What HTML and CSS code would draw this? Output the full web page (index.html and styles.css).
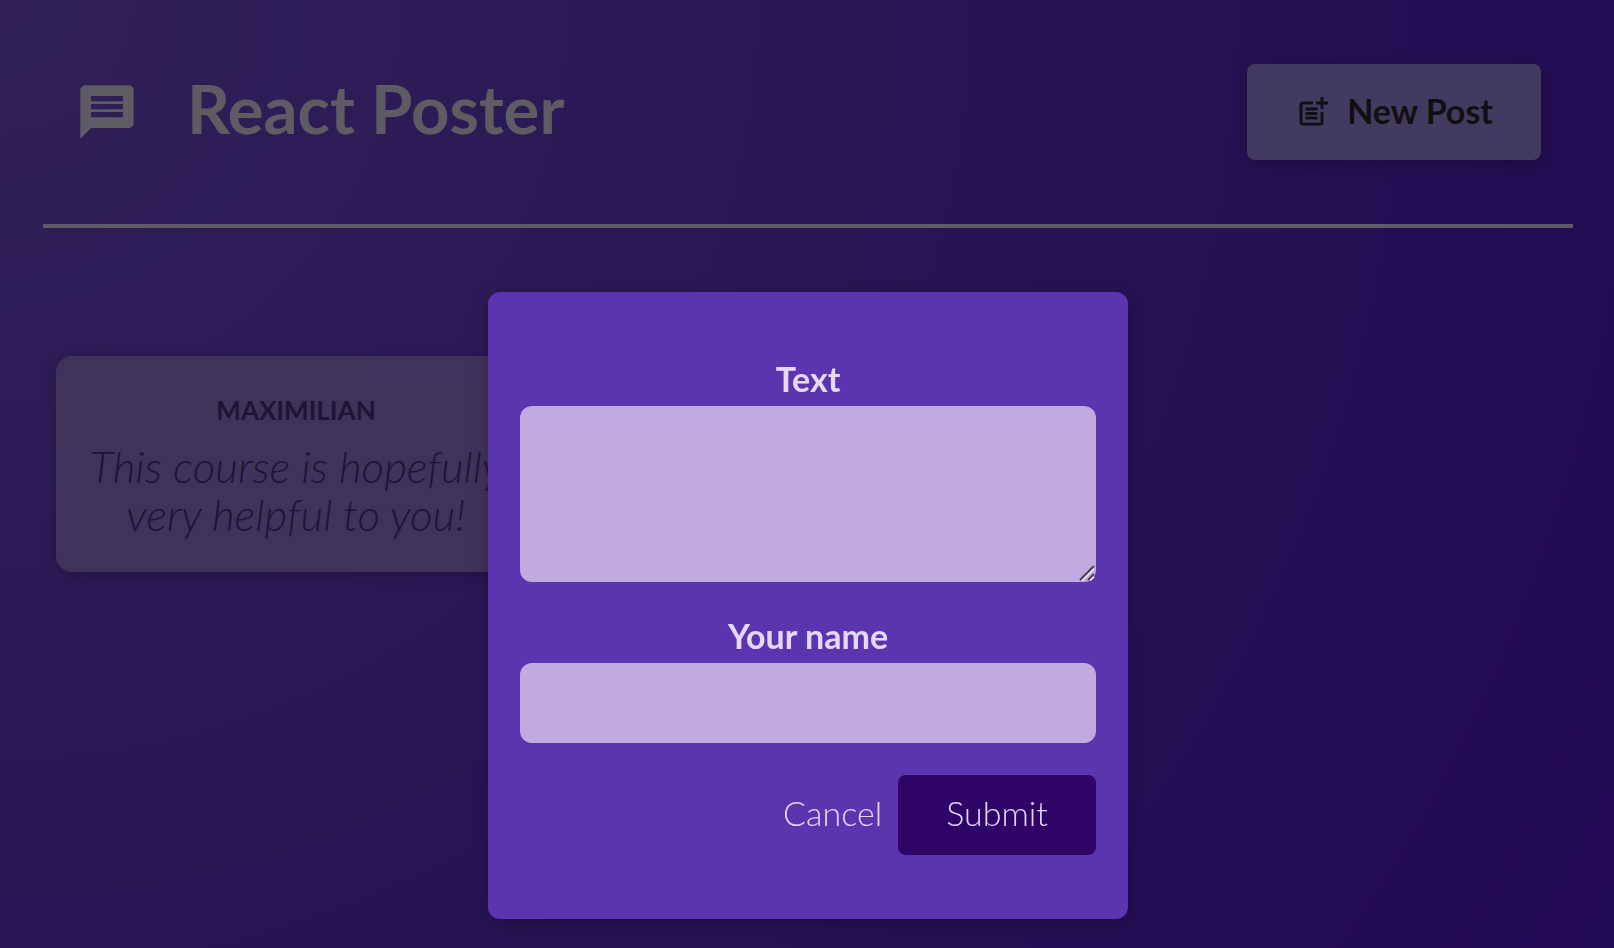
FILE: index.html
```html
<!DOCTYPE html>
<html lang="en">
<head>
<meta charset="utf-8">
<meta name="viewport" content="width=device-width, initial-scale=1">
<title>React Poster</title>
<link rel="stylesheet" href="styles.css">
</head>
<body>
<header class="header">
  <h1 class="logo">
    <svg class="logo-icon" viewBox="0 0 24 24" fill="currentColor" aria-hidden="true"><path d="M20 2H4c-1.100 0-1.990.9-1.990 2L2 22l4-4h14c1.100 0 2-.9 2-2V4c0-1.100-.9-2-2-2zm-2 12H6v-2h12v2zm0-3H6V9h12v2zm0-3H6V6h12v2z"/></svg>
    <span class="logo-text">React Poster</span>
  </h1>
  <button class="new-post" type="button">
    <svg class="new-post-icon" viewBox="0 0 24 24" fill="currentColor" aria-hidden="true"><path d="M17 19.220H5V7h7V5H5c-1.100 0-2 .9-2 2v12c0 1.100.9 2 2 2h12c1.100 0 2-.9 2-2v-7h-2v7.220z"/><path d="M19 2h-2v3h-3v2h3v3h2V7h3V5h-3zM7 9h8v2H7zM7 12h8v2H7zM7 15h8v2H7z"/></svg>
    <span class="new-post-text">New Post</span>
  </button>
</header>
<main>
  <ul class="posts">
    <li class="post">
      <p class="author">Maximilian</p>
      <p class="text">This course is hopefully very helpful to you!</p>
    </li>
  </ul>
</main>
<div class="backdrop"></div>
<dialog class="modal" open>
  <form class="form">
    <div class="field">
      <label for="body">Text</label>
      <div class="text-area">
        <textarea id="body" rows="3" required></textarea>
        <svg class="grip" viewBox="0 0 16 16" fill="none" stroke-width="2" aria-hidden="true"><path stroke="#eee6f6" d="M3 15.500 15 3.500M11 15.500l4-4"/><path stroke="#4b415a" d="M1 15 15 1M9 15l6-6"/></svg>
      </div>
    </div>
    <div class="field">
      <label for="name">Your name</label>
      <input id="name" type="text" required>
    </div>
    <div class="actions">
      <button class="cancel" type="button">Cancel</button>
      <button class="submit" type="submit">Submit</button>
    </div>
  </form>
</dialog>
</body>
</html>
```
FILE: styles.css
```css
* {
  box-sizing: border-box;
}

body {
  margin: 0;
  padding: 0 41px 0 43px;
  min-height: 100vh;
  font-family: Lato, "Open Sans", sans-serif;
  font-size: 34px;
  color: #ede3fa;
  background: radial-gradient(circle at top left, #7852d8, #5219cf);
}

.header {
  display: flex;
  justify-content: space-between;
  align-items: center;
  padding: 64px 32px;
  border-bottom: 4px solid #ece3f8;
}

.logo {
  display: flex;
  align-items: center;
  gap: 48px;
  margin: 0;
  font-size: 67px;
  line-height: 72px;
  font-weight: 700;
  color: #ece3f8;
}

.logo-icon {
  width: 64px;
  height: 64px;
}

.logo-text {
  padding-bottom: 8px;
}

.new-post {
  display: flex;
  align-items: center;
  gap: 16px;
  height: 96px;
  padding: 0 48px;
  border: none;
  border-radius: 8px;
  font: inherit;
  font-weight: 700;
  color: #29272c;
  background: #a991ee;
  box-shadow: 0 4px 16px rgba(0, 0, 0, 0.25);
  cursor: pointer;
}

.new-post-icon {
  width: 36px;
  height: 36px;
}

.new-post-text {
  padding-bottom: 4px;
}

.posts {
  display: grid;
  grid-template-columns: repeat(auto-fill, 480px);
  justify-content: start;
  gap: 32px;
  margin: 128px 0 0;
  padding: 0 13px;
  list-style: none;
}

.post {
  padding: 38px 24px 34px;
  border-radius: 16px;
  text-align: center;
  color: #4c3584;
  background: #9d80e4;
  box-shadow: 0 4px 16px rgba(0, 0, 0, 0.2);
}

.author {
  margin: 0;
  font-size: 26px;
  line-height: 32px;
  font-weight: 700;
  text-transform: uppercase;
}

.text {
  margin: 16px 0 0;
  font-size: 44px;
  line-height: 48px;
  font-weight: 300;
  font-style: italic;
}

.backdrop {
  position: fixed;
  inset: 0;
  background: rgba(0, 0, 0, 0.6);
}

.modal {
  position: absolute;
  top: 292px;
  left: 2px;
  right: 0;
  width: 640px;
  margin: 0 auto;
  padding: 0;
  border: none;
  border-radius: 12px;
  overflow: hidden;
  color: #e6d8fa;
  background: #5b35b0;
  box-shadow: 0 4px 16px rgba(0, 0, 0, 0.25);
}

.form {
  display: grid;
  gap: 32px;
  padding: 65px 32px 64px;
}

.field {
  display: grid;
  gap: 5px;
}

.field label {
  line-height: 44px;
  font-weight: 700;
  text-align: center;
}

.field textarea,
.field input {
  display: block;
  width: 100%;
  height: 80px;
  padding: 16px;
  border: none;
  border-radius: 12px;
  font: inherit;
  color: #2e0466;
  background: #c1aae0;
}

.field textarea {
  height: 176px;
  resize: both;
}

.field textarea::-webkit-resizer {
  background: transparent;
}

.text-area {
  position: relative;
}

.grip {
  position: absolute;
  right: 1px;
  bottom: 1px;
  width: 16px;
  height: 16px;
  pointer-events: none;
}

.actions {
  display: flex;
  justify-content: flex-end;
  gap: 16px;
}

.actions button {
  height: 80px;
  padding: 0 0 6px;
  border: none;
  border-radius: 8px;
  font: inherit;
  font-weight: 300;
  color: #e6d8fa;
  background: transparent;
  cursor: pointer;
}

.actions .submit {
  padding: 0 48px 6px;
  background: #2e0466;
}
```
